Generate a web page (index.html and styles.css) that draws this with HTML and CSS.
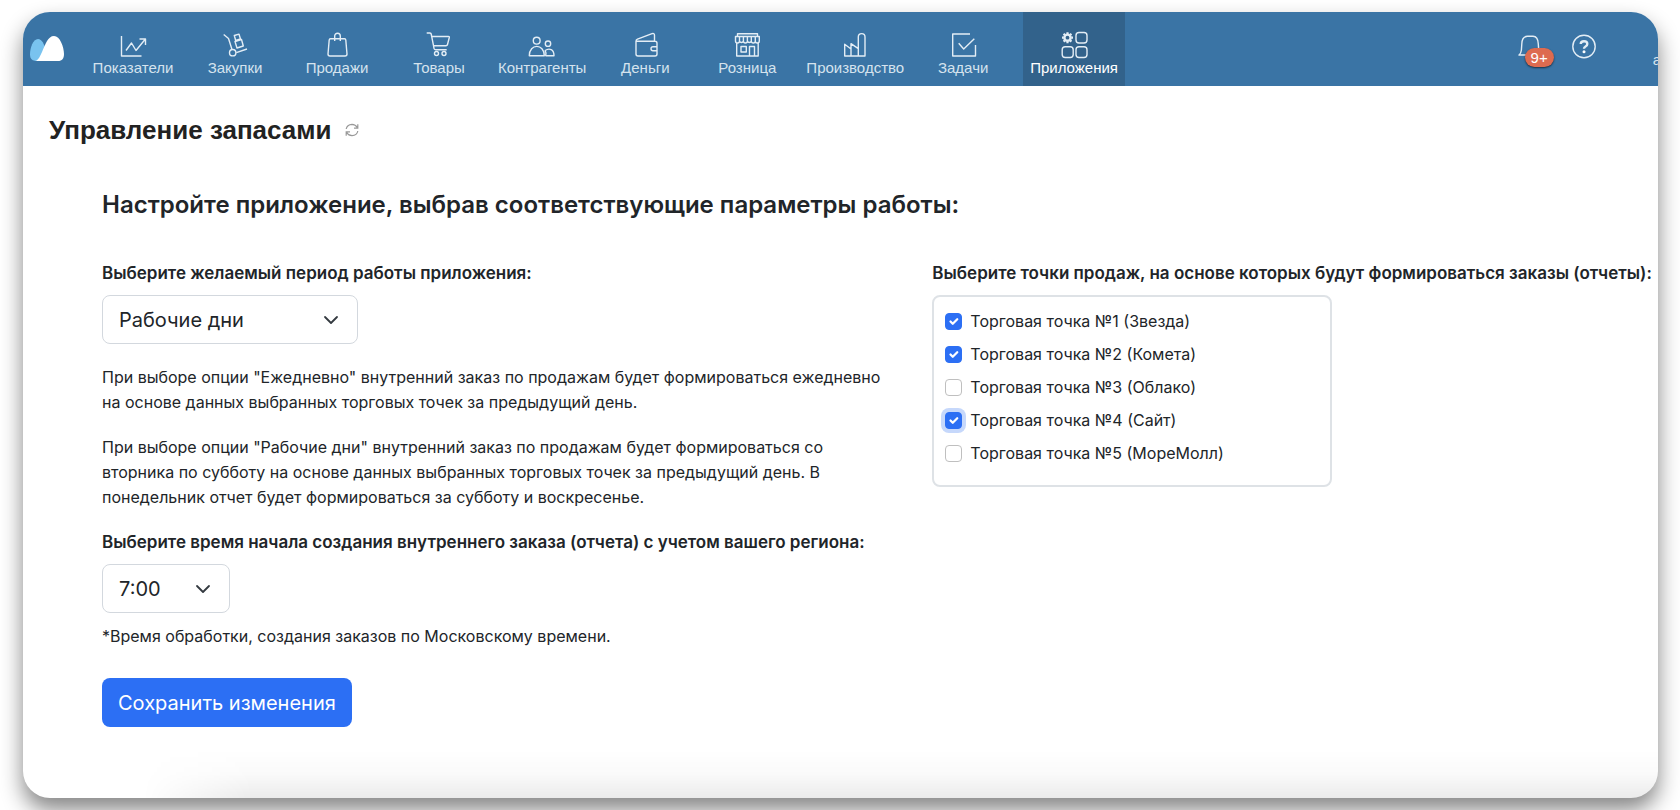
FILE: index.html
```html
<!DOCTYPE html>
<html lang="ru">
<head>
<meta charset="utf-8">
<meta name="viewport" content="width=device-width, initial-scale=1">
<title>Управление запасами</title>
<link rel="stylesheet" href="styles.css">
</head>
<body>
<div class="window">
  <header class="topbar">
    <a class="logo" href="#" aria-label="Главная">
      <svg width="34" height="26" viewBox="0 0 34 26">
        <path fill="#79c3ef" d="M8 3C3 3 0 12 0 18.500C0 23 2.500 25 7 25L17 24L16 14C14 8 12 3 8 3Z"/>
        <path fill="#fff" d="M24 0C18 0 15.500 8 12 16C10 20.500 8.500 23.500 6 25H28C32 25 34 22.500 34 18C34 11 30 0 24 0Z"/>
      </svg>
    </a>
    <nav class="nav">
      <a class="nav-item" href="#"><svg class="icon" viewBox="0 0 28 28"><path d="M2.500 5V25H22.500M7 19.500L12.500 12L17 19.500L26 8.500M20.500 8H26.500V14"/></svg><span>Показатели</span></a>
      <a class="nav-item" href="#"><svg class="icon" viewBox="0 0 28 28"><path d="M2.700 3.500L7.500 7.500L11 18.500M15.300 21.700L26 18M13.300 4.500L18 3.200L19.500 8L14.700 9.500ZM14 10.500L20.500 8.500L22.300 15L16 17Z"/><circle cx="11.700" cy="21.700" r="3.200"/></svg><span>Закупки</span></a>
      <a class="nav-item" href="#"><svg class="icon" viewBox="0 0 28 28"><path d="M7.500 7.700H21.500Q22.700 7.700 22.800 9L24 23Q24 25 22 25H7Q5 25 5 23L6.200 9Q6.300 7.700 7.500 7.700ZM11.700 10V5A2.800 2.800 0 0 1 17.300 5V10"/></svg><span>Продажи</span></a>
      <a class="nav-item" href="#"><svg class="icon" viewBox="0 0 28 28"><path d="M1.700 2H5Q6 2 6.200 3L8.500 14.700L9 17.500Q9.200 18.700 10.500 18.700H21.700M6.700 5.500H23.500Q24.500 5.500 24.300 6.500L22.500 13.500Q22.200 14.700 21 14.700H8.500"/><circle cx="11.500" cy="22.500" r="2"/><circle cx="19" cy="22.500" r="2"/></svg><span>Товары</span></a>
      <a class="nav-item" href="#"><svg class="icon" viewBox="0 0 28 28"><circle cx="8.700" cy="9.700" r="3.400"/><path d="M1.300 24.700C1.300 12.200 16.300 12.200 16.300 24.700ZM17.700 24.700H26C26 18.500 21.500 16.500 17.200 19.500Q18.500 22 17.700 24.700Z"/><circle cx="20" cy="12.700" r="2.700"/></svg><span>Контрагенты</span></a>
      <a class="nav-item" href="#"><svg class="icon" viewBox="0 0 28 28"><path d="M26 15.500V12.300Q26 10.300 24 10.300H5V23Q5 25 7 25H24Q26 25 26 23V19.700M26 15.700H22A2 2 0 0 0 22 19.700H26ZM5 10.300Q5 8.800 6.500 8.200L21 2.700Q23.500 2 23.500 4.300V10.300"/></svg><span>Деньги</span></a>
      <a class="nav-item" href="#"><svg class="icon" viewBox="0 0 28 28"><path d="M4.500 5.500V2.700H24.500V5.500M2.500 5.500H26.300V10A2 2 0 0 1 22.300 10A2 2 0 0 1 18.300 10A2 2 0 0 1 14.400 10A2 2 0 0 1 10.400 10A2 2 0 0 1 6.500 10A2 2 0 0 1 2.500 10ZM6.500 5.500V10M10.400 5.500V10M14.400 5.500V10M18.300 5.500V10M22.300 5.500V10M3.700 12V25H25.200V12M8 15.500H13.300V21H8ZM16.500 25V15.500H21.500V25"/></svg><span>Розница</span></a>
      <a class="nav-item" href="#"><svg class="icon" viewBox="0 0 28 28"><path d="M3.700 25V13.300L10 18V12.700L17.300 17.700V6A3.300 3.300 0 0 1 24 6V25ZM10 18V25M17.300 17.700V25"/></svg><span>Производство</span></a>
      <a class="nav-item" href="#"><svg class="icon" viewBox="0 0 28 28"><path d="M21 3H3.700V25H26.500V14M9.700 12.300L14.700 18L25.300 7.700"/></svg><span>Задачи</span></a>
      <a class="nav-item nav-item-active" href="#" aria-current="page"><svg class="icon" viewBox="0 0 28 28"><rect x="16" y="1.500" width="11" height="10.500" rx="3"/><rect x="2.200" y="15.700" width="11" height="10.800" rx="3"/><rect x="16" y="15.700" width="11" height="10.800" rx="3"/><circle cx="7.500" cy="6.700" r="3.100" stroke-width="2.400"/><path stroke-width="2.200" d="M7.500 3V1.200M7.500 10.400V12.200M3.800 6.700H2M11.200 6.700H13M4.900 4.100L3.600 2.800M10.100 4.100L11.400 2.800M4.900 9.300L3.600 10.600M10.100 9.300L11.400 10.600"/></svg><span>Приложения</span></a>
    </nav>
    <div class="tools">
      <button class="tool bell" type="button" aria-label="Уведомления">
        <svg class="icon" viewBox="0 0 28 28"><path d="M3 24H25Q23 22.500 22.700 19L22.300 13Q22 5.500 17 5.300H11.500Q6 5.500 5.800 13L5.400 19Q5 22.500 3 24Z"/></svg>
        <span class="badge">9+</span>
      </button>
      <button class="tool" type="button" aria-label="Помощь">
        <svg class="icon" viewBox="0 0 28 28"><circle cx="14" cy="15.500" r="11.200"/><path stroke-width="2.400" d="M10.700 13Q10.800 10.300 14 10.300Q17.300 10.300 17.300 12.900Q17.300 14.500 15.500 15.500Q14 16.300 14 17.800"/><circle class="dot" cx="14" cy="20.800" r="1.500"/></svg>
      </button>
      <a class="account" href="#">a</a>
    </div>
  </header>

  <main class="page">
    <div class="page-head">
      <h1 class="page-title">Управление запасами</h1>
      <button class="refresh" type="button" aria-label="Обновить">
        <svg width="14" height="14" viewBox="0 0 14 14"><path d="M1.200 6Q2 1.500 7 1.300Q10.500 1.300 12.300 4.500M12.800 8Q12 12.500 7 12.700Q3.500 12.700 1.700 9.500M12.800 1.300V5.200H9M1.200 12.700V8.800H5"/></svg>
      </button>
    </div>

    <form class="settings">
      <h2 class="settings-title">Настройте приложение, выбрав соответствующие параметры работы:</h2>
      <div class="columns">
        <div class="column">
          <label class="label" for="period">Выберите желаемый период работы приложения:</label>
          <select class="select" id="period"><option>Рабочие дни</option><option>Ежедневно</option></select>
          <p class="text">При выборе опции "Ежедневно" внутренний заказ по продажам будет формироваться ежедневно на основе данных выбранных торговых точек за предыдущий день.</p>
          <p class="text">При выборе опции "Рабочие дни" внутренний заказ по продажам будет формироваться со вторника по субботу на основе данных выбранных торговых точек за предыдущий день. В понедельник отчет будет формироваться за субботу и воскресенье.</p>
          <label class="label" for="time">Выберите время начала создания внутреннего заказа (отчета) с учетом вашего региона:</label>
          <select class="select select-small" id="time"><option>7:00</option><option>8:00</option></select>
          <p class="note">*Время обработки, создания заказов по Московскому времени.</p>
          <button class="save" type="button">Сохранить изменения</button>
        </div>
        <fieldset class="column points">
          <legend class="label">Выберите точки продаж, на основе которых будут формироваться заказы (отчеты):</legend>
          <div class="points-box">
            <label class="check"><input type="checkbox" checked>Торговая точка №1 (Звезда)</label>
            <label class="check"><input type="checkbox" checked>Торговая точка №2 (Комета)</label>
            <label class="check"><input type="checkbox">Торговая точка №3 (Облако)</label>
            <label class="check"><input class="focused" type="checkbox" checked>Торговая точка №4 (Сайт)</label>
            <label class="check"><input type="checkbox">Торговая точка №5 (МореМолл)</label>
          </div>
        </fieldset>
      </div>
    </form>
  </main>
</div>
</body>
</html>
```

FILE: styles.css
```css
* { box-sizing: border-box; }

body {
  margin: 0;
  padding: 12px 22px 12px 23px;
  background: #fff;
  color: #212529;
  font: 16px/25px Inter, "Noto Sans", sans-serif;
}

.window {
  position: relative;
  min-height: calc(100vh - 24px);
  overflow: hidden;
  border-radius: 27px;
  background: #fff;
  box-shadow: 0 12px 22px rgba(0, 0, 0, .48);
}

/* Soft shade along the lower edge */
.window::after {
  content: "";
  position: absolute;
  inset: auto 0 0 120px;
  height: 48px;
  background: linear-gradient(rgba(0, 0, 0, 0), rgba(0, 0, 0, .02) 50%, rgba(0, 0, 0, .08));
  mask-image: linear-gradient(90deg, transparent, #000 110px);
  pointer-events: none;
}

.topbar {
  display: flex;
  height: 74px;
  background: #3a74a5;
  font-family: "Liberation Sans", Arial, sans-serif;
  font-size: 15px;
  line-height: 16px;
}

.logo { flex: none; width: 60px; padding: 24px 0 0 7px; }

.nav { display: flex; gap: 2px; }

.nav-item {
  display: flex;
  flex-direction: column;
  align-items: center;
  gap: 1px;
  min-width: 100px;
  padding: 19px 7px 0;
  color: #d5e3ee;
  text-decoration: none;
}

.nav-item-active { margin-left: 8px; background: #32628b; color: #fff; }

.icon {
  width: 28px;
  height: 28px;
  fill: none;
  stroke: #e3edf5;
  stroke-width: 1.4;
  stroke-linejoin: round;
}
.icon .dot { fill: #fff; stroke: none; }

.tools { display: flex; gap: 26px; margin-left: auto; margin-right: -3px; padding-top: 19px; }

.tool {
  position: relative;
  width: 28px;
  height: 28px;
  padding: 0;
  border: 0;
  background: none;
}

.badge {
  position: absolute;
  top: 17px;
  left: 9px;
  width: 29px;
  border-radius: 10px;
  background: #dd6b50;
  box-shadow: 0 1px 2px rgba(0, 0, 0, .6);
  color: #fff;
  font: 15px/19px "Liberation Sans", Arial, sans-serif;
}

.account { margin-left: 29px; padding-top: 21px; color: #d5e3ee; text-decoration: none; }

.page-head { display: flex; align-items: center; gap: 13px; padding: 27px 26px 0; }

.page-title {
  margin: 0;
  color: #222;
  font: bold 26px/34px "Liberation Sans", Arial, sans-serif;
}

.refresh { display: flex; padding: 0; border: 0; background: none; }
.refresh svg { fill: none; stroke: #999; stroke-width: 1.2; }

.settings { padding: 42px 0 70px 79px; }

.settings-title { margin: 0 0 40px; font-size: 24px; font-weight: 600; line-height: 32px; }

.columns { display: grid; grid-template-columns: 10fr 9fr; gap: 24px; }

.column { min-width: 0; }

.label {
  display: block;
  margin: 0 0 9px;
  padding: 0;
  font-size: 17px;
  font-weight: 600;
  white-space: nowrap;
}

.select {
  display: block;
  width: 256px;
  height: 49px;
  margin-bottom: 21px;
  padding: 0 48px 0 16px;
  border: 1px solid #d3d8de;
  border-radius: 8px;
  appearance: none;
  background: #fff url("data:image/svg+xml,%3Csvg xmlns='http://www.w3.org/2000/svg' viewBox='0 0 16 16'%3E%3Cpath fill='none' stroke='%23343a40' stroke-linecap='round' stroke-linejoin='round' stroke-width='1.8' d='m2 5 6 6 6-6'/%3E%3C/svg%3E") no-repeat right 18px center / 16px 16px;
  color: #212529;
  font: 20px/30px Inter, "Noto Sans", sans-serif;
}

.select-small { width: 128px; margin-bottom: 11px; }

.text { max-width: 784px; margin: 0 0 20px; }

.note { margin: 0 0 29px; }

.save {
  height: 49px;
  padding: 0 16px;
  border: 0;
  border-radius: 8px;
  background: #2c6ff4;
  color: #fff;
  font: 20px/30px Inter, "Noto Sans", sans-serif;
}

.points { margin: 0; padding: 0; border: 0; }

.points-box {
  display: flex;
  flex-direction: column;
  gap: 8px;
  width: 400px;
  max-width: 100%;
  padding: 12px 11px 19px;
  border: 2px solid #dee2e6;
  border-radius: 8px;
}

.check { display: flex; align-items: center; gap: 8px; }

.check input {
  width: 17px;
  height: 17px;
  margin: 0;
  border: 1px solid #bfbfbf;
  border-radius: 4px;
  appearance: none;
  background: #fff;
}

.check input:checked {
  border-color: #2c6ff4;
  background: #2c6ff4 url("data:image/svg+xml,%3Csvg xmlns='http://www.w3.org/2000/svg' viewBox='0 0 20 20'%3E%3Cpath fill='none' stroke='%23fff' stroke-linecap='round' stroke-linejoin='round' stroke-width='3' d='m6 10 3 3 6-6'/%3E%3C/svg%3E") center / 100%;
}

.check .focused { box-shadow: 0 0 0 4px #c6d8fb; }
```
